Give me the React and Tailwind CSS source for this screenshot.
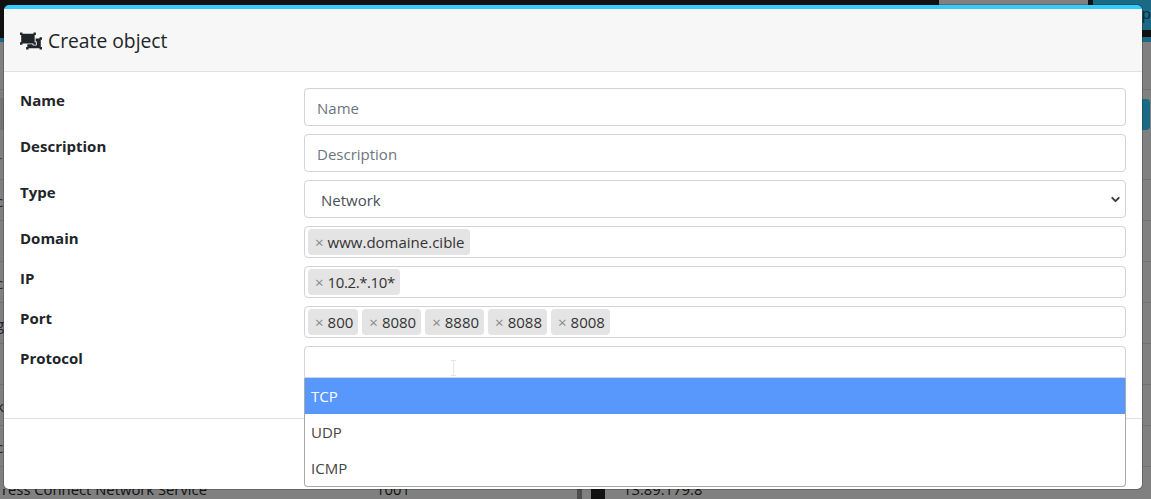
import React from 'react';
import { ChevronDown } from 'lucide-react';
import { FaObjectUngroup } from 'react-icons/fa';

const FONT = '"Open Sans", "Noto Sans", sans-serif';

// rows of the table behind the backdrop, only their edges show
const BG_ROWS = ['c', '', 'c', 'g', ':', 'k', 'c'];

function Tag({ children, className = '' }) {
  return (
    <span className={`flex h-[26px] items-center rounded-[4px] bg-[#e4e4e4] pl-[7px] pr-[5px] text-[15px] text-[#333] ${className}`}>
      <span className="mr-[4px] text-[15px] tracking-normal text-[#888]">×</span>
      {children}
    </span>
  );
}

function Row({ label, children, className = 'mb-2' }) {
  return (
    <div className={`flex ${className}`}>
      <label className="w-[284px] shrink-0 text-[15px] font-bold leading-6 text-[#212529]">{label}</label>
      <div className="min-w-0 flex-1">{children}</div>
    </div>
  );
}

function TagBox({ tags, tagClass }) {
  return (
    <div className="flex h-8 items-center gap-1 rounded-[4px] border border-[#ced4da] bg-white px-[3px]">
      {tags.map((t) => (
        <Tag key={t} className={tagClass}>{t}</Tag>
      ))}
    </div>
  );
}

function TextInput({ placeholder }) {
  return (
    <input
      placeholder={placeholder}
      className="block h-[38px] w-full rounded-[4px] border border-[#ced4da] bg-white px-3 pt-[2px] text-[15px] text-[#495057] outline-none placeholder:text-[#6c757d]"
    />
  );
}

export default function App() {
  return (
    <div className="relative h-[499px] w-[1151px] overflow-hidden bg-[#808080]" style={{ fontFamily: FONT }}>
      {/* page behind the backdrop */}
      <div className="flex h-[42px] bg-[#1a6a85]">
        <div className="h-[38px] w-[941px] bg-[#111]" />
        <div className="h-[38px] w-[149px] bg-[#111]">
          <div className="h-[30px] bg-[#808080]" />
        </div>
        <div className="h-[37px] w-[5px] bg-[#111]" />
        <div className="h-[37px] flex-1 border-b-[7px] border-[#111] bg-[#1a6a85] pl-[49px] text-[15px] leading-[26px] text-[#123]">p</div>
      </div>
      <div className="h-[48px] border-b border-[#737373]" />
      <div className="mt-2 flex h-[32px] justify-between">
        <span className="h-full w-1 bg-[#757575]" />
        <span className="mr-px mt-px h-[31px] w-[8px] rounded-r-[4px] bg-[#1a6a85]" />
      </div>
      <div className="h-[50px] overflow-hidden border-b border-[#737373] text-[15px] leading-[60px] text-[#445]">
        <span className="-ml-[4px] block">r</span>
      </div>
      {BG_ROWS.map((ch, i) => (
        <div key={i} className="h-[41px] overflow-hidden border-b border-[#737373] text-[15px] leading-[43px] text-[#223]">
          <span className="-ml-[4px] block">{ch}</span>
        </div>
      ))}

      <div className="absolute inset-x-0 bottom-0 flex h-[10px] overflow-hidden text-[14.8px] leading-[10px] text-[#111]">
        <span className="w-[376px] shrink-0 -translate-y-[5px] pl-[2px]">ress Connect Network Service</span>
        <span className="w-[201px] shrink-0 -translate-y-[5px]">1001</span>
        <span className="h-full w-[5px] shrink-0 bg-[#4d4d4d]" />
        <span className="ml-[9px] h-full w-[14px] shrink-0 bg-[#111]" />
        <span className="ml-[18px] -translate-y-[5px]">13.89.179.8</span>
      </div>

      {/* modal */}
      <div className="absolute left-1 top-[5px] h-[484px] w-[1138px] rounded-[5px] border-t-4 border-[#33ccff] bg-white shadow-[0_0_0_1px_rgba(0,0,0,0.2)]">
        <div className="flex h-[63px] items-center gap-[6px] border-b border-[#dee2e6] bg-[#f7f7f7] px-4 pt-[1px]">
          <FaObjectUngroup size={22} className="text-[#212529]" />
          <h5 className="text-[19.3px] font-medium leading-none text-[#212529]">Create object</h5>
        </div>

        <div className="px-4 pt-4">
          <Row label="Name"><TextInput placeholder="Name" /></Row>
          <Row label="Description"><TextInput placeholder="Description" /></Row>
          <Row label="Type">
            <div className="flex h-[38px] items-center justify-between rounded-[4px] border border-[#ced4da] bg-white pl-4 pr-[3px] pt-[2px] text-[15px] text-[#495057]">
              <span>Network</span>
              <ChevronDown size={13} strokeWidth={3.5} className="-translate-y-px text-[#343a40]" />
            </div>
          </Row>
          <Row label="Domain"><TagBox tags={['www.domaine.cible']} /></Row>
          <Row label="IP"><TagBox tags={['10.2.*.10*']} tagClass="tracking-[-0.4px]" /></Row>
          <Row label="Port"><TagBox tags={['800', '8080', '8880', '8088', '8008']} /></Row>
          <Row label="Protocol" className="">
            <div className="flex h-8 items-center rounded-t-[4px] border border-[#ced4da] bg-white pl-[145px] pt-[12px]">
              {/* mouse cursor over the search field */}
              <svg width="7" height="16" viewBox="0 0 7 16" fill="none" stroke="#e5e5e5" className="shrink-0">
                <path d="M1 .5h5M3.500 .5v15M1 15.500h5" />
              </svg>
            </div>
          </Row>
        </div>

        <div className="absolute inset-x-0 top-[409px] h-px bg-[#dee2e6]" />

        {/* open dropdown */}
        <div className="absolute left-[300px] top-[369px] w-[822px] overflow-hidden rounded-b-[4px] border border-t-0 border-[#aaa] bg-white text-[15px] text-[#444]">
          <div className="flex h-[36px] items-center bg-[#5897fb] px-[6px] text-white">TCP</div>
          <div className="flex h-[36px] items-center px-[6px]">UDP</div>
          <div className="flex h-[36px] items-center px-[6px]">ICMP</div>
        </div>
      </div>
    </div>
  );
}
